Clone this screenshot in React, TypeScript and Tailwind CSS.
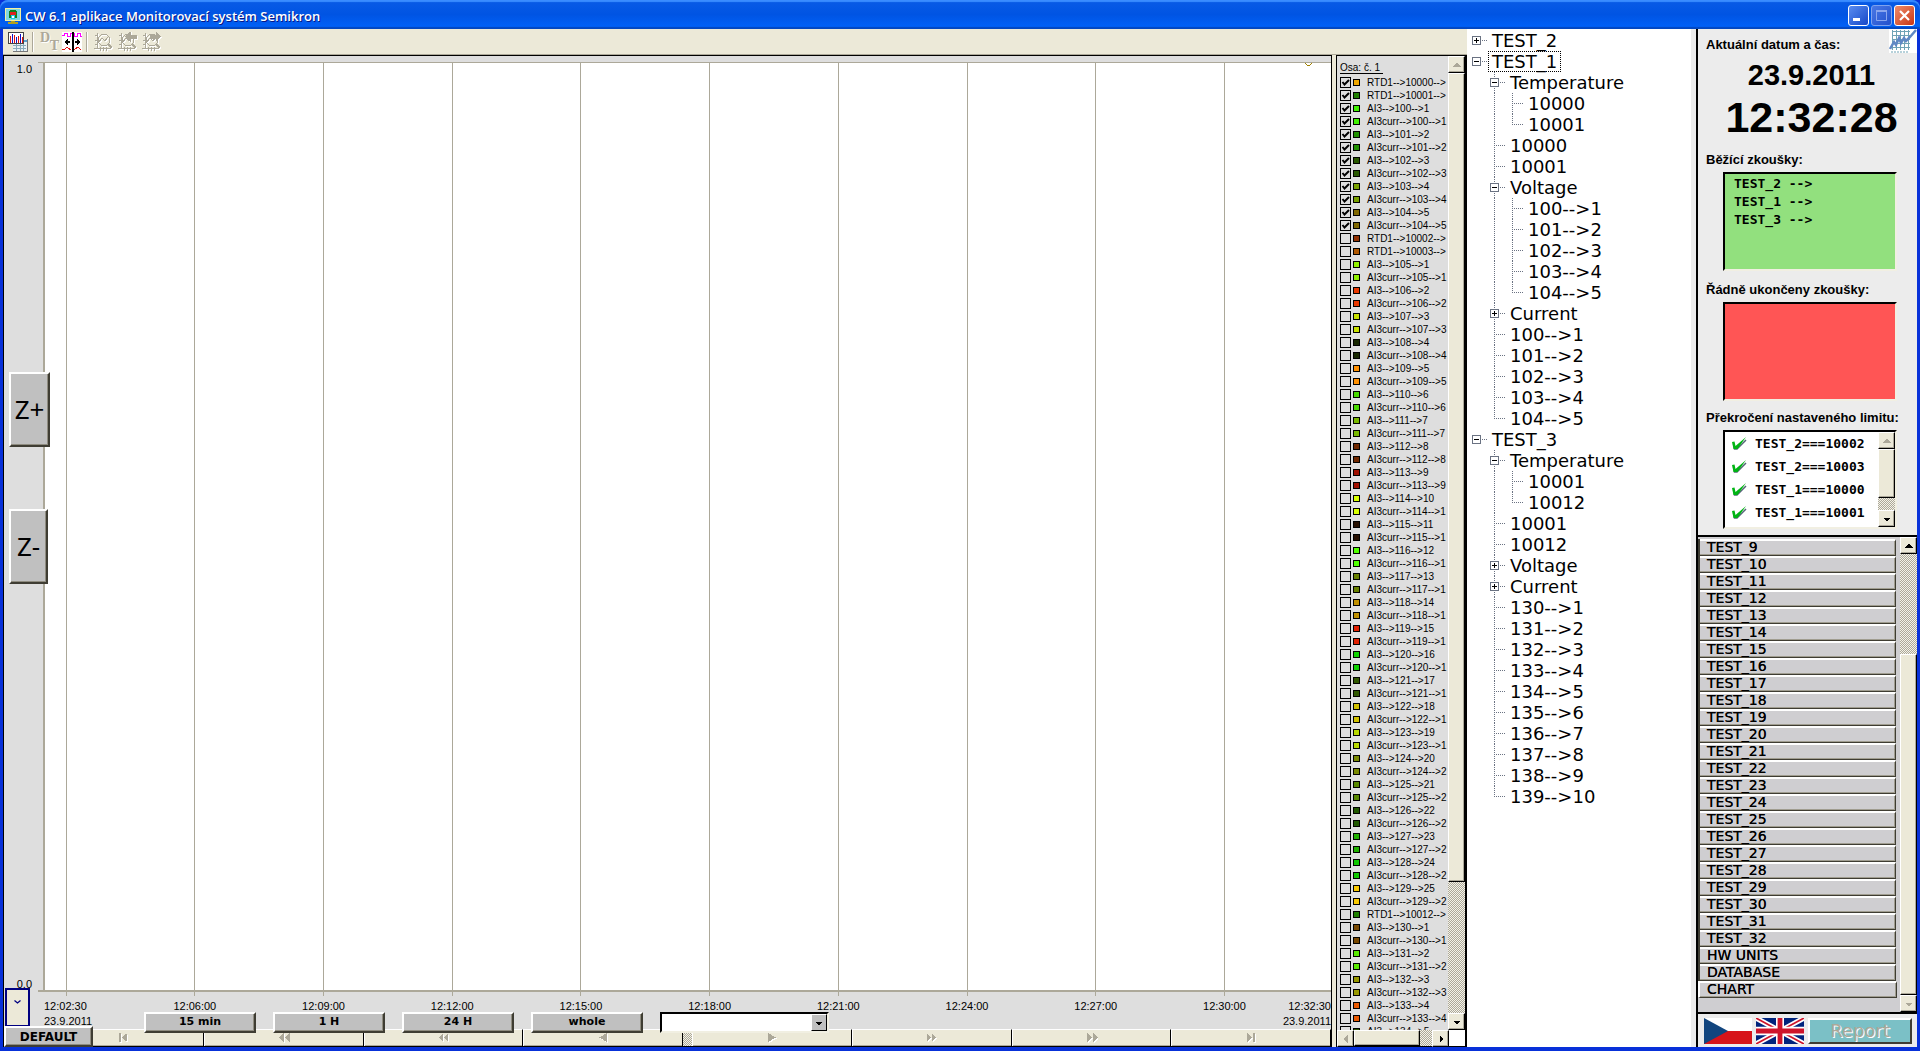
import { ReactNode } from "react";
import clsx from "clsx";

type Dir = "up" | "down" | "left" | "right";

interface Channel {
  name: string;
  color: string;
  checked: boolean;
}

interface TreeNode {
  label: string;
  open?: boolean;
  selected?: boolean;
  children?: TreeNode[];
}

// longest name that fits the legend column
const NAME_CHARS = 17;

// color of every measured unit, starting at 100
const UNIT_COLORS = [
  "#40f000", "#209000", "#285800", "#78a000", "#806800", "#90f000", "#e83800",
  "#c8e000", "#182800", "#ff9000", "#48d800", "#78b800", "#702800", "#a01000",
  "#d8ff00", "#281000", "#50ff00", "#688000", "#c09000", "#e02000", "#10d000",
  "#305800", "#d0c000", "#b8d800", "#788800", "#588800", "#205800", "#20b000",
  "#10c800", "#f8c800", "#784800", "#58e800", "#989800", "#e85800", "#305800",
];

function unitChannels(from: number, to: number, firstPos: number, checked = false): Channel[] {
  const out: Channel[] = [];
  for (let n = from; n <= to; n++) {
    const tail = `${n}-->${firstPos + n - from}`;
    const color = UNIT_COLORS[n - 100];
    out.push({ name: `AI3-->${tail}`, color, checked });
    out.push({ name: `AI3curr-->${tail}`.slice(0, NAME_CHARS), color, checked });
  }
  return out;
}

const CHANNELS: Channel[] = [
  { name: "RTD1-->10000-->", color: "#f0a800", checked: true },
  { name: "RTD1-->10001-->", color: "#208000", checked: true },
  ...unitChannels(100, 104, 1, true),
  { name: "RTD1-->10002-->", color: "#903000", checked: false },
  { name: "RTD1-->10003-->", color: "#b05800", checked: false },
  ...unitChannels(105, 129, 1),
  { name: "RTD1-->10012-->", color: "#208000", checked: false },
  ...unitChannels(130, 133, 1),
  { name: "AI3-->134-->5", color: "#305800", checked: false },
];

function leaves(from: number, count: number): TreeNode[] {
  return Array.from({ length: count }, (_, i) => ({ label: `${from + i}-->${i + 1}` }));
}

const TREE: TreeNode[] = [
  { label: "TEST_2", open: false },
  {
    label: "TEST_1",
    open: true,
    selected: true,
    children: [
      { label: "Temperature", open: true, children: [{ label: "10000" }, { label: "10001" }] },
      { label: "10000" },
      { label: "10001" },
      { label: "Voltage", open: true, children: leaves(100, 5) },
      { label: "Current", open: false },
      ...leaves(100, 5),
    ],
  },
  {
    label: "TEST_3",
    open: true,
    children: [
      { label: "Temperature", open: true, children: [{ label: "10001" }, { label: "10012" }] },
      { label: "10001" },
      { label: "10012" },
      { label: "Voltage", open: false },
      { label: "Current", open: false },
      ...leaves(130, 10),
    ],
  },
];

const MENU = [
  ...Array.from({ length: 24 }, (_, i) => `TEST_${i + 9}`),
  "HW UNITS",
  "DATABASE",
];

const TICKS = [
  "12:02:30", "12:06:00", "12:09:00", "12:12:00", "12:15:00",
  "12:18:00", "12:21:00", "12:24:00", "12:27:00", "12:30:00",
];
const tickX = (i: number) => `${1.72 + i * 10}%`;

const DITHER = "bg-[repeating-conic-gradient(#aca899_0_25%,#f4f2e8_0_50%)] bg-[length:2px_2px]";
const RAISED = "border border-t-white border-l-white border-r-black border-b-black shadow-[inset_-1px_-1px_0_#aca899]";
const GREY_BTN =
  "bg-[#c0c0c0] border-2 border-t-white border-l-white border-r-[#3f3d33] border-b-[#3f3d33] shadow-[inset_-1px_-1px_0_#8f8c80]";
const SUNKEN = "border-2 border-t-black border-l-black border-r-[#f1efe2] border-b-[#f1efe2]";

const ARROWS: Record<Dir, string> = {
  up: "M0 5.5 4 1.5 8 5.5z",
  down: "M0 2.5 4 6.5 8 2.5z",
  left: "M5.5 0 1.5 4 5.5 8z",
  right: "M2.5 0 6.5 4 2.5 8z",
};

function ArrowButton({ dir, disabled }: { dir: Dir; disabled?: boolean }) {
  return (
    <button
      aria-label={`Scroll ${dir}`}
      className={clsx("flex size-[17px] shrink-0 items-center justify-center bg-[#ece9d8]", RAISED)}
    >
      <svg viewBox="0 0 8 8" className="size-2" shapeRendering="crispEdges">
        <path d={ARROWS[dir]} fill={disabled ? "#aca899" : "#000"} />
      </svg>
    </button>
  );
}

interface ScrollProps {
  before: number;
  thumb: number;
  after: number;
  upOff?: boolean;
  downOff?: boolean;
}

function VScroll({ before, thumb, after, upOff, downOff }: ScrollProps) {
  return (
    <div className="flex w-[17px] shrink-0 flex-col">
      <ArrowButton dir="up" disabled={upOff} />
      <div className={DITHER} style={{ flexGrow: before }} />
      <div className={clsx("bg-[#ece9d8]", RAISED)} style={{ flexGrow: thumb }} />
      <div className={DITHER} style={{ flexGrow: after }} />
      <ArrowButton dir="down" disabled={downOff} />
    </div>
  );
}

function TitleBar() {
  return (
    <header className="flex h-[29px] shrink-0 items-center rounded-t-lg bg-linear-to-b from-[#0a5be6] via-[#0054e3] to-[#0163fb] pl-[5px] pr-[5px] pt-0.5 shadow-[inset_0_2px_1px_#3a8cff,inset_0_-2px_1px_#0347c0]">
      <svg viewBox="0 0 16 16" className="size-4" shapeRendering="crispEdges">
        <path d="M0 0h16v13H0z" fill="#f4f0a0" />
        <path d="M1 1h14v11H1z" fill="#7fd8e0" />
        <path d="M5 2h6v1h1v7H4V3h1z" fill="#108020" />
        <path d="M5 4h6v3H5z" fill="#e02020" />
        <path d="M6 7h4v4H6z" fill="#20c8e0" />
        <path d="M7 8h2v2H7z" fill="#fff" />
        <path d="M6 13h4v1H6zM3 14h10v2H3z" fill="#b0a020" />
      </svg>
      <h1 className="ml-1 flex-1 font-['Open_Sans',sans-serif] text-[13px] font-semibold leading-5 text-white [text-shadow:1px_1px_0_#0a1883]">
        CW 6.1 aplikace Monitorovací systém Semikron
      </h1>
      <div className="flex gap-0.5">
        <button aria-label="Minimize" className="size-[21px] rounded-[3px] border border-white bg-linear-to-br from-[#5a8cf0] to-[#1747c8]">
          <svg viewBox="0 0 19 19" className="size-full"><path d="M4 12h7v3H4z" fill="#fff" /></svg>
        </button>
        <button aria-label="Maximize" className="size-[21px] rounded-[3px] border border-[#7ea2ee] bg-linear-to-br from-[#4a78e6] to-[#2350cc]">
          <svg viewBox="0 0 19 19" className="size-full">
            <path d="M4.5 5.5h10v9h-10z" fill="none" stroke="#8aa6ee" />
            <path d="M4 4h11v2H4z" fill="#8aa6ee" />
          </svg>
        </button>
        <button aria-label="Close" className="size-[21px] rounded-[3px] border border-white bg-linear-to-br from-[#ee8a68] to-[#c8310c]">
          <svg viewBox="0 0 19 19" className="size-full"><path d="M5 5l9 9M14 5l-9 9" stroke="#fff" strokeWidth="2.2" /></svg>
        </button>
      </div>
    </header>
  );
}

function ZoomIcon({ mark }: { mark?: "left" | "right" }) {
  return (
    <svg viewBox="0 0 20 20" className="size-5" shapeRendering="crispEdges" fill="none">
      {["#fff", "#aca899"].map((c, i) => (
        <g key={c} stroke={c} transform={i === 0 ? "translate(1 1)" : undefined}>
          <path d="M3.5 1v16M0 16.5h17M1 3.5h2M1 8.5h2M1 12.5h2M6.5 15v4M9.5 15v4M12.5 15v4" />
          <path d="M7.5 2.5h5l3 3v5l-3 3h-5l-3-3v-5z" />
          <path d="M14 12l4 4" strokeWidth="2.5" />
          <path d="M5 10l3-4 3 3 3-4" />
          {mark === "left" && <path d="M8 4.5l4-4v2.5h6v3h-6v2.5z" fill={c} />}
          {mark === "right" && <path d="M18 4.5l-4-4v2.5h-6v3h6v2.5z" fill={c} />}
        </g>
      ))}
    </svg>
  );
}

function Toolbar() {
  return (
    <div className="flex h-[26px] shrink-0 items-center border-b border-[#aca899] bg-[#ece9d8] pl-[5px]">
      <button aria-label="Charts" className="size-5">
        <svg viewBox="0 0 20 20" className="size-5" shapeRendering="crispEdges">
          <path d="M5 7h15v13H5z" fill="#777" />
          <path d="M5 7h14v12H5z" fill="#e8f0f4" />
          <path d="M5 13.5h13M5 16.5h13M8.5 12v7M12.5 12v7M15.5 9v10" stroke="#8ab" />
          <path d="M15 8h4v2h-4z" fill="#58a0d0" />
          <path d="M0 0h16v12H0z" fill="#444" />
          <path d="M1 1h14v10H1z" fill="#fff" />
          <path d="M2.5 4v7M6.5 3v8M10.5 4v7M14.5 5v6" stroke="#e01010" />
          <path d="M4.5 2v9M8.5 5v6M12.5 2v9" stroke="#1010c0" />
        </svg>
      </button>
      <i className="ml-1 h-5 w-0.5 border-l border-[#aca899] bg-white" />
      <button aria-label="Date and time" className="relative ml-1.5 h-5 w-[19px] font-['Liberation_Serif',serif] text-[14px] font-bold leading-3 text-[#aca899] [text-shadow:1px_1px_0_#fff]">
        <span className="absolute left-0 top-0">D</span>
        <span className="absolute bottom-0 right-0">T</span>
      </button>
      <button aria-label="Cursors" className="ml-[3px] size-5">
        <svg viewBox="0 0 20 20" className="size-5" shapeRendering="crispEdges" fill="none">
          <path d="M0 0h20v20H0z" fill="#fff" />
          <path d="M0 3.5h2V1.5h3v3h3V1.5h2M11 1.5h1v3h3V1.5h3v3h2" stroke="#f0f" />
          <path d="M0 17h3l2-2 4 3M11 17h2l3-2 3 3" stroke="#e01010" />
          <path d="M10.5 0v20" stroke="#000" strokeWidth="2" />
          <path d="M2 10l4-3v2h2v2H6v2zM19 10l-4-3v2h-2v2h2v2z" fill="#000" />
        </svg>
      </button>
      <i className="ml-1 h-5 w-0.5 border-l border-[#aca899] bg-white" />
      <button aria-label="Zoom" className="ml-1.5 size-5"><ZoomIcon /></button>
      <button aria-label="Zoom back" className="ml-1 size-5"><ZoomIcon mark="left" /></button>
      <button aria-label="Zoom forward" className="ml-1 size-5"><ZoomIcon mark="right" /></button>
    </div>
  );
}

function NavButton({ label, d }: { label: string; d: string }) {
  return (
    <button
      aria-label={label}
      className="flex h-[17px] flex-1 items-center justify-center border-r border-t border-r-black border-t-white bg-[#ece9d8] shadow-[inset_1px_0_0_#fff,inset_0_-1px_0_#aca899]"
    >
      <svg viewBox="-3 0 14 10" className="h-2.5 w-3.5" shapeRendering="crispEdges">
        <path d={d} fill="#fff" transform="translate(1 1)" />
        <path d={d} fill="#aca899" />
      </svg>
    </button>
  );
}

function ChartPanel() {
  return (
    <section className="relative flex min-w-0 flex-1 flex-col border-l border-t border-black bg-[#dedede]">
      <div className="flex min-h-0 flex-1 pt-1.5">
        <div className="flex w-10 shrink-0 flex-col justify-between pr-3 text-right font-['Liberation_Sans',sans-serif] text-[11px] leading-[14px]">
          <span>1.0</span>
          <span>0.0</span>
        </div>
        <svg className="h-full min-w-0 flex-1 overflow-visible" shapeRendering="crispEdges">
          <rect width="100%" height="100%" fill="#fff" />
          {TICKS.map((t, i) => (
            <g key={t} stroke="#aca899">
              <line x1={tickX(i)} x2={tickX(i)} y1="0" y2="100%" />
              <line x1={tickX(i)} x2={tickX(i)} y1="0" y2="100%" className="translate-y-[5px]" />
            </g>
          ))}
          <g stroke="#aca899">
            <line x1="-6" x2="100%" y1="0" y2="0" />
            <line x1="-6" x2="100%" y1="100%" y2="100%" strokeWidth="2" />
            <line x1="0" x2="0" y1="0" y2="100%" strokeWidth="2" />
          </g>
          <svg x="98%" width="8" height="4" overflow="visible">
            <path d="M0 1l2 2h3l2-2" fill="none" stroke="#a08000" />
          </svg>
        </svg>
      </div>
      <div className="h-[38px] shrink-0 pl-10">
        <svg className="size-full font-['Liberation_Sans',sans-serif] text-[11px]">
          {TICKS.map((t, i) => (
            <text key={t} x={i === 0 ? 0 : tickX(i)} y="19" textAnchor={i === 0 ? "start" : "middle"}>
              {t}
            </text>
          ))}
          <text x="100%" y="19" textAnchor="end">12:32:30</text>
          <text x="0" y="34">23.9.2011</text>
          <text x="100%" y="34" textAnchor="end">23.9.2011</text>
        </svg>
      </div>
      <div className="flex shrink-0 border-b border-black pl-10">
        <NavButton label="To start" d="M0 0h2v9H0zM7 0v9L3 4.5zM8 0v9L4 4.5z" />
        <NavButton label="Page back" d="M5 0v9L0 4.5zM11 0v9L6 4.5z" />
        <NavButton label="Half page back" d="M4 0v9L0 4.5zM9 0v9L5 4.5z" />
        <NavButton label="Step back" d="M8 0v9L0 4.5z" />
        <div className={clsx("w-[9px]", DITHER)} />
        <NavButton label="Step forward" d="M1 0v9l8-4.5z" />
        <NavButton label="Half page forward" d="M0 0v9l4-4.5zM5 0v9l4-4.5z" />
        <NavButton label="Page forward" d="M0 0v9l5-4.5zM6 0v9l5-4.5z" />
        <NavButton label="To end" d="M0 0v9l5-4.5zM6 0h2v9H6z" />
      </div>

      {/* controls floating over the chart */}
      <button className={clsx("absolute left-[5px] top-[316px] h-[75px] w-[41px] font-['Noto_Sans',sans-serif] text-[26px]", GREY_BTN)}>
        Z+
      </button>
      <button className={clsx("absolute left-[5px] top-[453px] h-[75px] w-[39px] font-['Noto_Sans',sans-serif] text-[26px]", GREY_BTN)}>
        Z-
      </button>
      <button aria-label="Expand" className="absolute bottom-5 left-px flex h-[39px] w-[25px] items-center justify-center border-2 border-[#000080] bg-[#ece9d8] pb-3">
        <svg viewBox="0 0 7 4" className="h-1 w-[7px]"><path d="M.5.5L3.5 3 6.5.5" stroke="#000080" fill="none" strokeWidth="1.3" /></svg>
      </button>
      <button className={clsx("absolute bottom-0 left-0 h-[21px] w-[89px] font-['DejaVu_Sans',sans-serif] text-xs font-bold leading-4", GREY_BTN)}>
        DEFAULT
      </button>
      <div className="absolute bottom-3.5 left-[140px] flex gap-[17px] font-['DejaVu_Sans',sans-serif] text-[11px] font-bold">
        {["15 min", "1 H", "24 H", "whole"].map((r) => (
          <button key={r} className={clsx("h-[21px] w-28", GREY_BTN)}>{r}</button>
        ))}
        <div className="relative h-[21px] w-[169px]">
          <select aria-label="Range" className={clsx("size-full appearance-none rounded-none bg-white", SUNKEN)} />
          <span className="pointer-events-none absolute right-0.5 top-0.5 flex h-[17px] w-4 items-center justify-center border border-b-black border-l-white border-r-black border-t-white bg-[#c0c0c0]">
            <svg viewBox="0 0 8 8" className="size-2" shapeRendering="crispEdges"><path d={ARROWS.down} /></svg>
          </span>
        </div>
      </div>
    </section>
  );
}

function ChannelRow({ channel }: { channel: Channel }) {
  return (
    <label className="flex h-[13px] items-center whitespace-nowrap">
      <span className="relative size-[11px] shrink-0">
        <input type="checkbox" defaultChecked={channel.checked} className="peer block size-[11px] appearance-none border border-black" />
        <svg viewBox="0 0 11 11" className="pointer-events-none absolute inset-0 hidden size-[11px] peer-checked:block">
          <path d="M2.5 5l2 2.5L9 3" fill="none" stroke="#000" strokeWidth="2" />
        </svg>
      </span>
      <i className="ml-0.5 size-[7px] shrink-0 border border-black" style={{ background: channel.color }} />
      <span className="ml-[7px]">{channel.name}</span>
    </label>
  );
}

function Legend() {
  return (
    <aside className="flex w-[131px] shrink-0 flex-col border-l border-r-2 border-t border-black">
      <div className="flex min-h-0 flex-1">
        <div className="min-w-0 flex-1 overflow-hidden bg-[#dedede] pl-[3px] pt-[5px] font-['Liberation_Sans',sans-serif] text-[10px] leading-[13px]">
          <div className="mb-0.5 h-[13px] w-[43px] border-b border-black">Osa: č. 1</div>
          {CHANNELS.map((c, i) => <ChannelRow key={i} channel={c} />)}
        </div>
        <VScroll before={0} thumb={810} after={131} upOff />
      </div>
      <div className="flex h-[17px] shrink-0 border-b border-black bg-white pr-4">
        <ArrowButton dir="left" disabled />
        <div className={clsx("flex-[5] bg-[#ece9d8]", RAISED)} />
        <div className={clsx("w-3", DITHER)} />
        <ArrowButton dir="right" />
      </div>
    </aside>
  );
}

function TreeRows({ nodes, guides = [] }: { nodes: TreeNode[]; guides?: boolean[] }) {
  const root = guides.length === 0;
  return (
    <ul>
      {nodes.map((node, i) => {
        const last = i === nodes.length - 1;
        return (
          <li key={`${node.label}-${i}`}>
            <div className="flex h-[21px] items-stretch">
              {guides.map((g, k) => (
                <i key={k} className="relative w-[18px] shrink-0">
                  {g && k > 0 && <i className="absolute inset-y-0 left-[9px] border-l border-dotted border-gray-500" />}
                </i>
              ))}
              <span className="relative w-[18px] shrink-0">
                {!root && (
                  <i className={clsx("absolute left-[9px] top-0 border-l border-dotted border-gray-500", last ? "bottom-2.5" : "bottom-0")} />
                )}
                <i className="absolute left-[9px] right-[-2px] top-2.5 border-t border-dotted border-gray-500" />
                {node.open !== undefined && (
                  <button aria-label={node.open ? "Collapse" : "Expand"} className="absolute left-[5px] top-1.5 size-[9px] border border-gray-500 bg-white">
                    <svg viewBox="0 0 7 7" className="block size-[7px]" shapeRendering="crispEdges">
                      <path d={node.open ? "M1 3.5h5" : "M1 3.5h5M3.5 1v5"} stroke="#000" />
                    </svg>
                  </button>
                )}
              </span>
              <span className={clsx("ml-[3px] border border-dotted px-[3px] leading-[19px]", node.selected ? "border-black" : "border-transparent")}>
                {node.label}
              </span>
            </div>
            {node.children && <TreeRows nodes={node.children} guides={[...guides, !last]} />}
          </li>
        );
      })}
    </ul>
  );
}

function FieldLabel({ children, className }: { children: ReactNode; className?: string }) {
  return <h2 className={clsx("whitespace-nowrap pl-2 text-[13px] font-bold leading-4", className)}>{children}</h2>;
}

function StatusPanel() {
  return (
    <div className="relative border-b-2 border-black pb-1.5 pt-2 font-['Liberation_Sans',sans-serif]">
      <svg viewBox="0 0 28 24" className="absolute right-0 top-0 h-6 w-7">
        <path d="M0 0h28v24H0z" fill="#fff" />
        <path d="M3 2.5h18M3 6.5h18M3 10.5h18M3 14.5h18M3 18.5h18M3.5 1v20M7.5 1v20M11.5 1v20M15.5 1v20M19.5 1v20" stroke="#6fa3b5" />
        <path d="M2 23h18" stroke="#6fa3b5" strokeDasharray="2 1" />
        <path d="M1 20l4-7 2 3 3-7 2 5 3-5 2 3 4-4 6-7" fill="none" stroke="#6088c4" strokeWidth="2.5" />
      </svg>
      <FieldLabel>Aktuální datum a čas:</FieldLabel>
      <div className="mt-1.5 pl-2 text-center text-[29px] font-bold leading-8">23.9.2011</div>
      <div className="mt-1 pl-2 text-center text-[43px] font-bold leading-[44px]">12:32:28</div>

      <FieldLabel className="mt-[13px]">Běžící zkoušky:</FieldLabel>
      <ul className={clsx("ml-[25px] mr-5 mt-1 h-[99px] bg-[#92e07e] pl-[9px] pt-px font-['DejaVu_Sans_Mono',monospace] text-[13px] font-bold leading-[18px]", SUNKEN)}>
        {["TEST_2", "TEST_1", "TEST_3"].map((t) => <li key={t}>{t} --&gt;</li>)}
      </ul>

      <FieldLabel className="mt-[11px]">Řádně ukončeny zkoušky:</FieldLabel>
      <div className={clsx("ml-[25px] mr-5 mt-1 h-[99px] bg-[#ff5555]", SUNKEN)} />

      <FieldLabel className="mt-[9px]">Překročení nastaveného limitu:</FieldLabel>
      <div className={clsx("ml-[25px] mr-5 mt-1 flex h-[99px] bg-white", SUNKEN)}>
        <ul className="min-w-0 flex-1 overflow-hidden pl-[7px] font-['DejaVu_Sans_Mono',monospace] text-[13px] font-bold leading-[23px]">
          {["TEST_2===10002", "TEST_2===10003", "TEST_1===10000", "TEST_1===10001"].map((t) => (
            <li key={t} className="flex items-center gap-2">
              <svg viewBox="0 0 15 14" className="h-3.5 w-[15px] shrink-0">
                <path d="M1.5 5.5l1 5.5h2.5L14 2" fill="none" stroke="#567" strokeWidth="1.5" transform="translate(0 1)" />
                <path d="M0 5l2.5-.5 1 4.5L14 0 5.5 12H1.5z" fill="#00b414" />
              </svg>
              {t}
            </li>
          ))}
        </ul>
        <VScroll before={0} thumb={49} after={13} upOff />
      </div>
    </div>
  );
}

const MENU_BTN =
  "block h-[17px] bg-[#cfced1] pb-px pl-[7px] text-left font-['DejaVu_Sans',sans-serif] text-sm leading-[13px] [text-shadow:0_0_0_#000] border-t-2 border-t-white border-b border-b-[#3f3d33] border-r border-r-[#3f3d33] shadow-[inset_-1px_-1px_0_#a09d90]";

function TestMenu() {
  return (
    <div className="flex min-h-0 flex-1">
      <nav className="min-w-0 flex-1 overflow-hidden bg-[#cfced1] pt-0.5">
        <div className="mr-1 border-l-2 border-[#3f3d33]">
          {MENU.map((m) => (
            <button key={m} className={clsx(MENU_BTN, "w-[196px]")}>{m}</button>
          ))}
        </div>
        <button className={clsx(MENU_BTN, "w-[199px] border-l-2 border-l-white")}>CHART</button>
      </nav>
      <VScroll before={100} thumb={337} after={0} downOff />
    </div>
  );
}

function FooterBar() {
  return (
    <footer className="flex h-[35px] shrink-0 items-center gap-1 border-t-2 border-black bg-[#ececec] pl-1.5 pr-[5px]">
      <button aria-label="Čeština">
        <svg viewBox="0 0 48 26" className="h-[26px] w-12">
          <path d="M0 0h48v13H0z" fill="#fff" />
          <path d="M0 13h48v13H0z" fill="#d7141a" />
          <path d="M0 0l24 13L0 26z" fill="#11457e" />
        </svg>
      </button>
      <button aria-label="English">
        <svg viewBox="0 0 60 30" preserveAspectRatio="none" className="h-[26px] w-12">
          <path d="M0 0h60v30H0z" fill="#00247d" />
          <path d="M0 0l60 30M60 0L0 30" stroke="#fff" strokeWidth="6" />
          <path d="M0 0l30 15M60 30L30 15M60 0L30 15M0 30l30-15" stroke="#cf142b" strokeWidth="2" />
          <path d="M30 0v30M0 15h60" stroke="#fff" strokeWidth="10" />
          <path d="M30 0v30M0 15h60" stroke="#cf142b" strokeWidth="6" />
        </svg>
      </button>
      <button className="h-[26px] flex-1 border-2 border-b-[#3f3d33] border-l-white border-r-[#3f3d33] border-t-white bg-[#7bc0c6] font-['DejaVu_Sans',sans-serif] text-lg leading-5 text-[#aca899] [text-shadow:1px_1px_0_#fff]">
        Report
      </button>
    </footer>
  );
}

export default function App() {
  return (
    <div className="flex h-screen flex-col overflow-hidden bg-[#0831d9] text-black">
      <TitleBar />
      <main className="mx-[3px] mb-1 flex min-h-0 flex-1 bg-[#ece9d8]">
        <div className="flex min-w-0 flex-1 flex-col">
          <Toolbar />
          <div className="flex min-h-0 flex-1">
            <ChartPanel />
            <div className="w-[5px] shrink-0 border-l border-black" />
            <Legend />
          </div>
        </div>
        <div className="w-[229px] shrink-0 border-r-[5px] border-[#ececec] bg-white pt-px font-['DejaVu_Sans',sans-serif] text-lg">
          <TreeRows nodes={TREE} />
        </div>
        <div className="flex w-[221px] shrink-0 flex-col border-l-2 border-black bg-[#ececec]">
          <StatusPanel />
          <TestMenu />
          <FooterBar />
        </div>
      </main>
    </div>
  );
}
